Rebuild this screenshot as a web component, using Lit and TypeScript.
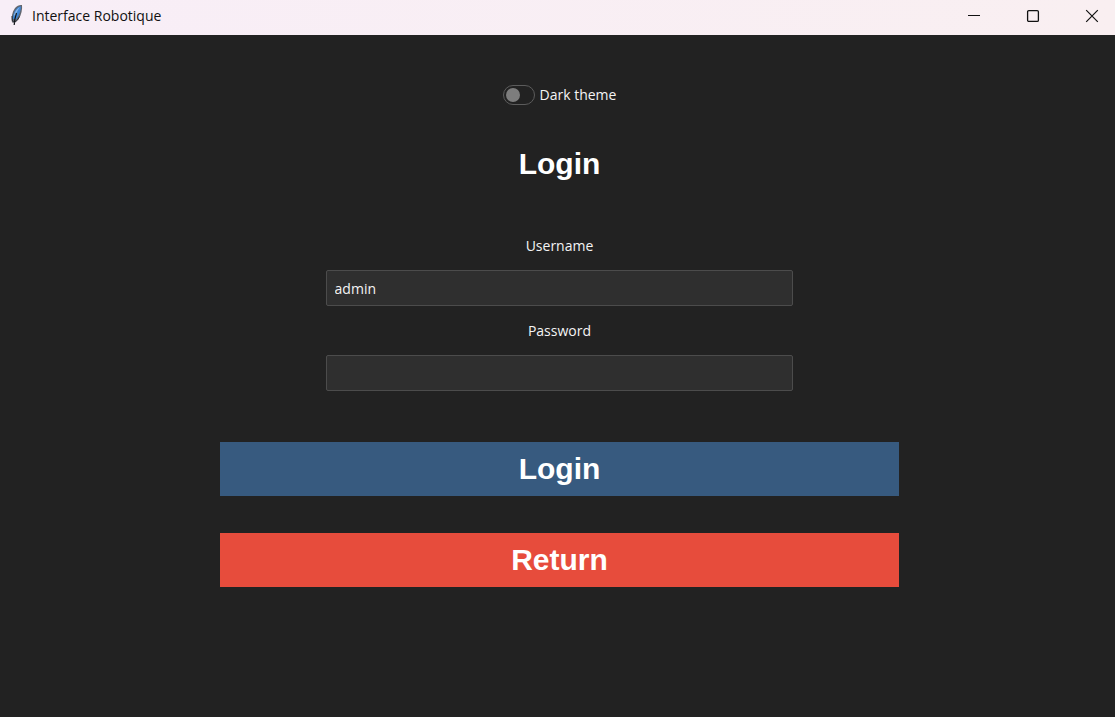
import { LitElement, html, css } from "lit";
import { customElement, state } from "lit/decorators.js";

@customElement("title-bar")
class TitleBar extends LitElement {
  static styles = css`
    :host {
      display: block;
    }
    .bar {
      display: flex;
      align-items: center;
      height: 35px;
      padding-left: 8px;
      box-sizing: border-box;
      background: linear-gradient(90deg, #f8eef7, #f9eff1);
      color: #111;
      font-family: "Open Sans", "Noto Sans", sans-serif;
    }
    .icon {
      width: 16px;
      height: 24px;
      margin-bottom: 6px;
    }
    .title {
      flex: 1;
      margin: 0 0 4px 8px;
      font-size: 14px;
      line-height: 20px;
      font-weight: 400;
    }
    .controls {
      display: flex;
      gap: 13px;
      margin-bottom: 4px;
    }
    .control {
      display: grid;
      place-items: center;
      width: 46px;
      height: 31px;
      padding: 0;
      border: 0;
      background: none;
      color: #111;
    }
    .control svg {
      width: 14px;
      height: 14px;
    }
  `;

  render() {
    return html`
      <header class="bar">
        <svg class="icon" viewBox="0 0 16 24" aria-hidden="true">
          <path d="M4 19.500C3 15 4 9 7 5C9 2.500 12 1.500 14 2C14.500 6 13.500 12 10.500 16C9 18 7 19.500 5 19.500Z" fill="#62666f" />
          <path d="M5 16C4.800 11 7 6.500 10.500 4L13 3.300C13 7 11.500 12.500 8 16.500Z" fill="#3f86d6" />
          <path d="M6 12C7 8.500 9 5.500 12 4C10 6.500 8.500 9 7.500 13Z" fill="#8fb9e8" />
          <path d="M8.500 10C7.300 13.500 6.500 17 6.200 22" fill="none" stroke="#111418" stroke-width="1.200" />
          <path d="M4 13L4.400 18L6.500 19.500L9.500 17L11.500 13.500" fill="none" stroke="#2a2d34" stroke-width="1" />
        </svg>
        <h1 class="title">Interface Robotique</h1>
        <div class="controls">
          <button class="control" type="button" aria-label="Minimize">
            <svg viewBox="0 0 14 14"><path d="M1 6.500H13" stroke="currentColor" /></svg>
          </button>
          <button class="control" type="button" aria-label="Maximize">
            <svg viewBox="0 0 14 14">
              <rect x="1.600" y="1.600" width="10.800" height="10.800" rx="1.200" fill="none" stroke="currentColor" stroke-width="1.300" />
            </svg>
          </button>
          <button class="control" type="button" aria-label="Close">
            <svg viewBox="0 0 14 14">
              <path d="M1.200 1.200L12.800 12.800M12.800 1.200L1.200 12.800" stroke="currentColor" stroke-width="1.200" />
            </svg>
          </button>
        </div>
      </header>
    `;
  }
}

@customElement("app-root")
class AppRoot extends LitElement {
  static styles = css`
    :host {
      display: flex;
      flex-direction: column;
      min-height: 100vh;
      background: #222;
      color: #f4f4f4;
      font-family: "Open Sans", "Noto Sans", sans-serif;
      font-size: 14px;
      line-height: 20px;
    }
    .page {
      display: flex;
      flex-direction: column;
      align-items: center;
      padding: 50px 0 48px 4px;
    }
    .theme {
      display: flex;
      align-items: center;
      gap: 5px;
    }
    .toggle {
      appearance: none;
      display: flex;
      align-items: center;
      box-sizing: border-box;
      width: 32px;
      height: 20px;
      margin: 0;
      padding: 0 2px;
      border: 1px solid #5c5c5c;
      border-radius: 10px;
    }
    .toggle::before {
      content: "";
      width: 14px;
      height: 14px;
      border-radius: 50%;
      background: #7d7d7d;
    }
    .toggle:checked {
      justify-content: flex-end;
    }
    .heading {
      margin: 41px 0 54px;
      color: #fff;
      font: bold 30px/36px "Liberation Sans", Arial, sans-serif;
    }
    .form {
      display: flex;
      flex-direction: column;
      align-items: center;
      width: 61.2%;
    }
    .field {
      display: flex;
      flex-direction: column;
      align-items: center;
      gap: 14px;
      width: 68.8%;
      margin-bottom: 15px;
    }
    .input {
      box-sizing: border-box;
      width: 100%;
      height: 36px;
      padding: 0 8px;
      border: 1px solid #4c4c4c;
      border-radius: 2px;
      outline: 0;
      background: #2f2f2f;
      color: #f4f4f4;
      font: inherit;
    }
    .actions {
      display: flex;
      flex-direction: column;
      gap: 37px;
      width: 100%;
      margin-top: 36px;
    }
    .action {
      height: 54px;
      padding: 0;
      border: 0;
      color: #fff;
      font: bold 30px/36px "Liberation Sans", Arial, sans-serif;
    }
    .primary {
      background: #375a7f;
    }
    .danger {
      background: #e74c3c;
    }
  `;

  @state() username = "admin";
  @state() password = "";

  render() {
    return html`
      <title-bar></title-bar>
      <main class="page">
        <label class="theme">
          <input class="toggle" type="checkbox" role="switch" />
          <span>Dark theme</span>
        </label>
        <h2 class="heading">Login</h2>
        <form class="form" @submit=${(e: Event) => e.preventDefault()}>
          <div class="field">
            <label for="username">Username</label>
            <input
              class="input"
              id="username"
              type="text"
              .value=${this.username}
              @input=${(e: Event) => (this.username = (e.target as HTMLInputElement).value)}
            />
          </div>
          <div class="field">
            <label for="password">Password</label>
            <input
              class="input"
              id="password"
              type="password"
              .value=${this.password}
              @input=${(e: Event) => (this.password = (e.target as HTMLInputElement).value)}
            />
          </div>
          <div class="actions">
            <button class="action primary" type="submit">Login</button>
            <button class="action danger" type="button">Return</button>
          </div>
        </form>
      </main>
    `;
  }
}
